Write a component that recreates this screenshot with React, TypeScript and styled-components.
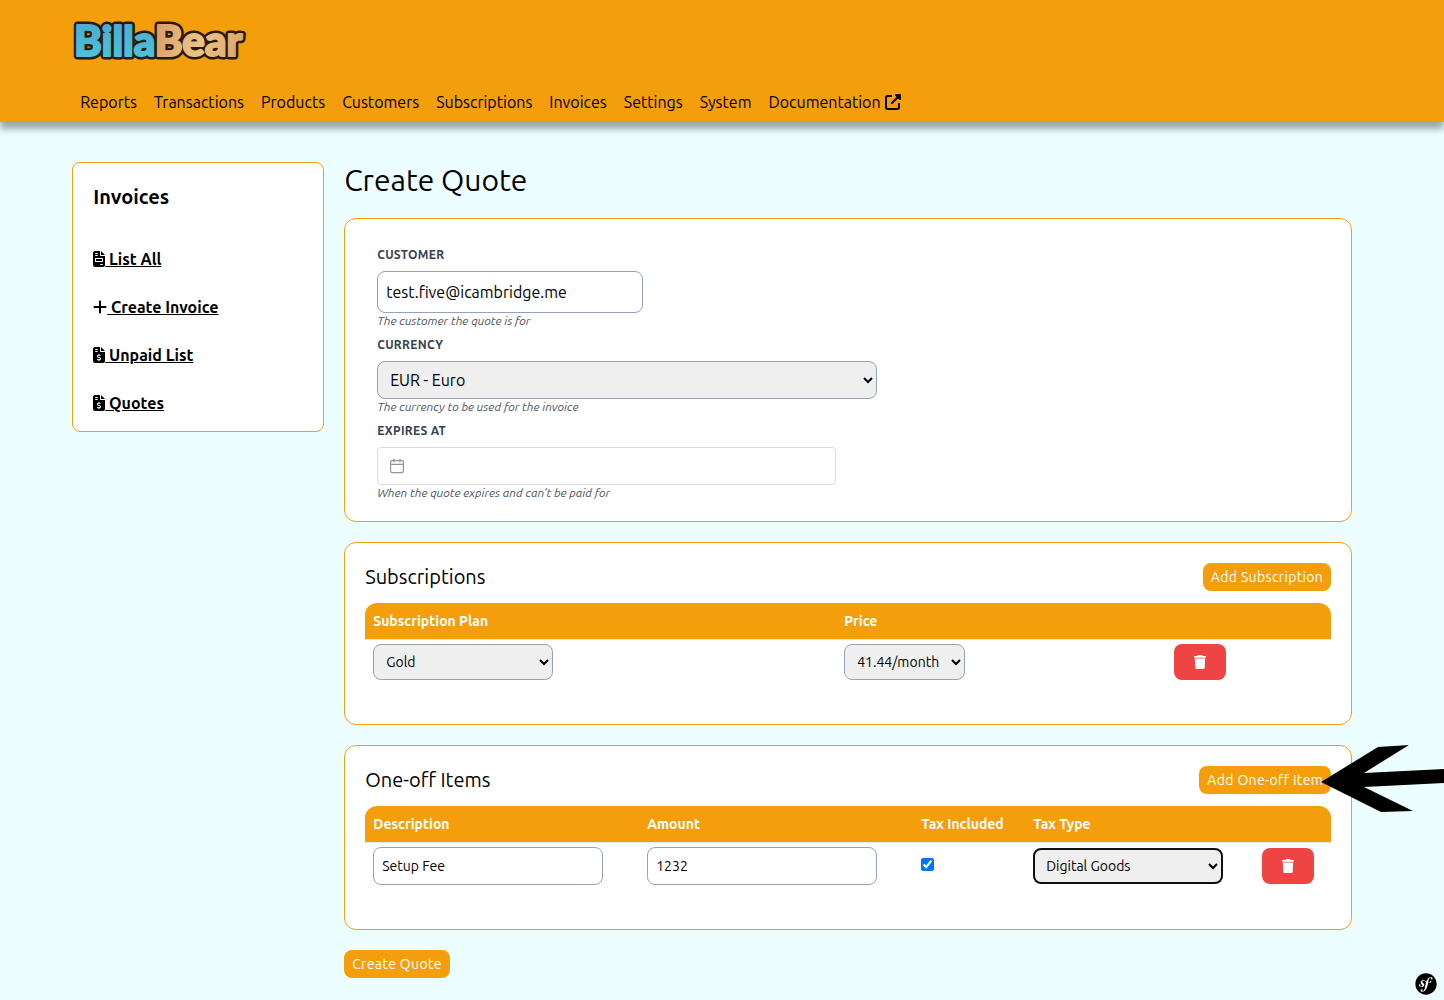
import React, { useState } from 'react';
import styled, { createGlobalStyle, css } from 'styled-components';
import {
  FaFileInvoice,
  FaFileInvoiceDollar,
  FaPlus,
  FaSymfony,
  FaTrash,
  FaUpRightFromSquare,
} from 'react-icons/fa6';

const orange = '#f59e0b';

const GlobalStyle = createGlobalStyle`
  *, *::before, *::after { box-sizing: border-box; }
  body {
    margin: 0;
    background: #ecfeff;
    color: #000;
    font-family: Ubuntu, "Noto Sans", sans-serif;
    font-size: 16px;
    line-height: 24px;
    overflow-x: hidden;
  }
  h1, h2, p, ul { margin: 0; padding: 0; font-weight: 400; }
  button, input, select { font-family: inherit; margin: 0; }
`;

const Header = styled.header`
  background: ${orange};
  padding: 20px 5% 8px;
  box-shadow: 0 7px 7px rgba(0, 0, 0, 0.35);
`;

const LogoLink = styled.a`
  display: block;
  width: 176px;
  height: 42px;
  svg { display: block; overflow: visible; }
`;

const Nav = styled.nav`
  display: flex;
  flex-wrap: wrap;
  gap: 17px;
  padding: 28px 8px 0;
`;

const NavLink = styled.a`
  display: flex;
  align-items: center;
  gap: 4px;
  color: #000;
  text-decoration: none;
`;

const Layout = styled.div`
  display: grid;
  grid-template-columns: 1fr 4fr;
  align-items: start;
  gap: 20px;
  max-width: 1280px;
  margin: 40px 20px 20px 5%;
`;

const Sidebar = styled.aside`
  background: #fff;
  border: 1px solid ${orange};
  border-radius: 8px;
  padding: 20px 20px 16px;
`;

const SidebarTitle = styled.h2`
  font-size: 20px;
  line-height: 28px;
  font-weight: 700;
  margin-bottom: 36px;
`;

const SideLinks = styled.ul`
  display: grid;
  gap: 24px;
  list-style: none;
`;

const SideLink = styled.a`
  color: #000;
  font-weight: 700;
`;

const IconSlot = styled.span<{ $width: number }>`
  svg {
    width: ${(p) => p.$width}px;
    height: 16px;
    vertical-align: -2px;
  }
`;

const PageTitle = styled.h1`
  font-size: 30px;
  line-height: 36px;
  margin-bottom: 20px;
`;

const Card = styled.section<{ $form?: boolean }>`
  background: #fff;
  border: 1px solid ${orange};
  border-radius: 12px;
  padding: ${(p) => (p.$form ? '28px 32px 20px' : '20px')};
  margin-bottom: 20px;
`;

const Fields = styled.div`
  display: grid;
  gap: 8px;
`;

const Field = styled.div`
  display: flex;
  flex-direction: column;
  align-items: flex-start;
`;

const FieldLabel = styled.label`
  color: #374151;
  font-size: 12px;
  line-height: 16px;
  font-weight: 700;
  letter-spacing: 0.025em;
  text-transform: uppercase;
  margin-bottom: 8px;
`;

const Hint = styled.p`
  color: #4b5563;
  font-size: 12px;
  line-height: 16px;
  font-style: italic;
`;

const control = css<{ $small?: boolean; $width: number }>`
  width: ${(p) => p.$width}px;
  max-width: 100%;
  border: 1px solid #94a3b8;
  border-radius: 8px;
  padding: 0 8px;
  color: #000;
  font-size: ${(p) => (p.$small ? 14 : 16)}px;
`;

const TextInput = styled.input<{ $small?: boolean; $width: number }>`
  ${control}
  display: block;
  height: ${(p) => (p.$small ? 38 : 42)}px;
  background: #fff;
`;

const Select = styled.select<{ $small?: boolean; $active?: boolean; $width: number }>`
  ${control}
  display: block;
  height: ${(p) => (p.$small ? 36 : 38)}px;
  background: #efefef;
  ${(p) => p.$active && 'border: 2px solid #101010; padding: 0 7px;'}
`;

const DateBox = styled.div`
  display: flex;
  align-items: center;
  gap: 8px;
  width: 459px;
  max-width: 100%;
  height: 38px;
  padding: 0 12px;
  border: 1px solid #ddd;
  border-radius: 4px;
  input {
    flex: 1;
    min-width: 0;
    border: 0;
    outline: 0;
    background: transparent;
    font-size: 16px;
  }
`;

const CardHead = styled.div`
  display: flex;
  justify-content: space-between;
  align-items: center;
  margin-bottom: 12px;
`;

const CardTitle = styled.h2`
  font-size: 20px;
  line-height: 28px;
`;

const Button = styled.button`
  display: block;
  border: 0;
  border-radius: 8px;
  background: ${orange};
  color: #fff;
  padding: 4px 8px;
  font-size: 14px;
  line-height: 20px;
  letter-spacing: 0.025em;
  cursor: pointer;
`;

const Pointed = styled.div`
  position: relative;
`;

const Arrow = styled.svg`
  position: absolute;
  top: -21px;
  right: -113px;
  pointer-events: none;
`;

const Table = styled.table`
  width: 100%;
  table-layout: fixed;
  border-collapse: separate;
  border-spacing: 0;
  margin-bottom: 20px;
  font-size: 14px;
  line-height: 20px;
  th {
    background: ${orange};
    background-clip: padding-box;
    color: #fff;
    font-weight: 700;
    text-align: left;
    padding: 8px;
    border-bottom: 1px solid #e5e7eb;
  }
  th:first-child { border-top-left-radius: 12px; }
  th:last-child { border-top-right-radius: 12px; }
  td { padding: 4px 8px; vertical-align: middle; }
`;

const Check = styled.input`
  display: block;
  width: 13px;
  height: 13px;
  margin: 0 0 4px;
`;

const DeleteButton = styled.button`
  display: flex;
  align-items: center;
  justify-content: center;
  width: 52px;
  height: 36px;
  border: 0;
  border-radius: 8px;
  background: #ef4444;
  color: #fff;
  cursor: pointer;
`;

const Profiler = styled.button`
  position: fixed;
  right: 7px;
  bottom: 5px;
  width: 22px;
  height: 22px;
  padding: 0;
  border: 0;
  border-radius: 50%;
  background: #fff;
  color: #000;
  cursor: pointer;
  svg { display: block; }
`;

const navItems = ['Reports', 'Transactions', 'Products', 'Customers', 'Subscriptions', 'Invoices', 'Settings', 'System'];

const sideItems = [
  { label: 'List All', Icon: FaFileInvoice, width: 12 },
  { label: 'Create Invoice', Icon: FaPlus, width: 14 },
  { label: 'Unpaid List', Icon: FaFileInvoiceDollar, width: 12 },
  { label: 'Quotes', Icon: FaFileInvoiceDollar, width: 12 },
];

const Wordmark = styled.text`
  font-family: Lato, sans-serif;
  font-weight: 900;
  font-size: 42px;
  stroke-linejoin: round;
`;

const Logo = () => (
  <svg width="176" height="42" viewBox="0 0 176 42" role="img" aria-label="BillaBear">
    <defs>
      <linearGradient id="blue" x1="0" y1="0" x2="0" y2="1">
        <stop offset="0.2" stopColor="#4aaed2" />
        <stop offset="0.8" stopColor="#4cc0d8" />
      </linearGradient>
      <linearGradient id="tan" gradientUnits="userSpaceOnUse" x1="84" y1="8" x2="172" y2="36">
        <stop offset="0" stopColor="#dd9c66" />
        <stop offset="0.5" stopColor="#eac587" />
        <stop offset="1" stopColor="#dfa168" />
      </linearGradient>
    </defs>
    <Wordmark x="2" y="36" strokeWidth="7" paintOrder="stroke">
      <tspan fill="url(#blue)" stroke="#2a1a10">Billa</tspan>
      <tspan fill="url(#tan)" stroke="#2a1a10">Bear</tspan>
    </Wordmark>
    <Wordmark x="2" y="36" strokeWidth="2" aria-hidden="true">
      <tspan fill="url(#blue)" stroke="url(#blue)">Billa</tspan>
      <tspan fill="url(#tan)" stroke="url(#tan)">Bear</tspan>
    </Wordmark>
  </svg>
);

const CalendarIcon = () => (
  <svg width="16" height="16" viewBox="0 0 16 16" fill="none" stroke="#959595" strokeLinecap="round" aria-hidden="true">
    <rect x="0.6" y="2.6" width="12.8" height="12" rx="1.5" strokeWidth="1.2" />
    <path d="M0.6 6.4h12.8M4 1v3M10 1v3" strokeWidth="1.2" />
  </svg>
);

export default function App() {
  const [email, setEmail] = useState('test.five@icambridge.me');
  const [expires, setExpires] = useState('');
  const [description, setDescription] = useState('Setup Fee');
  const [amount, setAmount] = useState('1232');
  const [taxIncluded, setTaxIncluded] = useState(true);

  return (
    <>
      <GlobalStyle />
      <Header>
        <LogoLink href="#home"><Logo /></LogoLink>
        <Nav>
          {navItems.map((item) => (
            <NavLink key={item} href={`#${item.toLowerCase()}`}>{item}</NavLink>
          ))}
          <NavLink href="#documentation">
            Documentation <FaUpRightFromSquare size={16} />
          </NavLink>
        </Nav>
      </Header>

      <Layout>
        <Sidebar>
          <SidebarTitle>Invoices</SidebarTitle>
          <SideLinks>
            {sideItems.map(({ label, Icon, width }) => (
              <li key={label}>
                <SideLink href="#invoices">
                  <IconSlot $width={width}><Icon /></IconSlot> {label}
                </SideLink>
              </li>
            ))}
          </SideLinks>
        </Sidebar>

        <main>
          <PageTitle>Create Quote</PageTitle>

          <Card $form>
            <Fields>
              <Field>
                <FieldLabel htmlFor="customer">Customer</FieldLabel>
                <TextInput id="customer" $width={266} value={email} onChange={(e) => setEmail(e.target.value)} />
                <Hint>The customer the quote is for</Hint>
              </Field>
              <Field>
                <FieldLabel htmlFor="currency">Currency</FieldLabel>
                <Select id="currency" $width={500}>
                  <option>EUR - Euro</option>
                </Select>
                <Hint>The currency to be used for the invoice</Hint>
              </Field>
              <Field>
                <FieldLabel htmlFor="expires">Expires At</FieldLabel>
                <DateBox>
                  <CalendarIcon />
                  <input id="expires" value={expires} onChange={(e) => setExpires(e.target.value)} />
                </DateBox>
                <Hint>When the quote expires and can't be paid for</Hint>
              </Field>
            </Fields>
          </Card>

          <Card>
            <CardHead>
              <CardTitle>Subscriptions</CardTitle>
              <Button type="button">Add Subscription</Button>
            </CardHead>
            <Table>
              <colgroup>
                <col width="471" />
                <col width="330" />
                <col width="165" />
              </colgroup>
              <thead>
                <tr>
                  <th>Subscription Plan</th>
                  <th>Price</th>
                  <th aria-label="Actions" />
                </tr>
              </thead>
              <tbody>
                <tr>
                  <td>
                    <Select $small $width={180} aria-label="Subscription Plan">
                      <option>Gold</option>
                    </Select>
                  </td>
                  <td>
                    <Select $small $width={121} aria-label="Price">
                      <option>41.44/month</option>
                    </Select>
                  </td>
                  <td>
                    <DeleteButton type="button" aria-label="Delete subscription"><FaTrash size={14} /></DeleteButton>
                  </td>
                </tr>
              </tbody>
            </Table>
          </Card>

          <Card>
            <CardHead>
              <CardTitle>One-off Items</CardTitle>
              <Pointed>
                <Button type="button">Add One-off Item</Button>
                <Arrow width="123" height="68" viewBox="0 0 123 68" aria-hidden="true">
                  <path d="M0 37 57 2 88 0 43 28 123 24V38L43 42 92 66 60 67Z" />
                </Arrow>
              </Pointed>
            </CardHead>
            <Table>
              <colgroup>
                <col width="274" />
                <col width="274" />
                <col width="112" />
                <col width="229" />
                <col width="77" />
              </colgroup>
              <thead>
                <tr>
                  <th>Description</th>
                  <th>Amount</th>
                  <th>Tax Included</th>
                  <th>Tax Type</th>
                  <th aria-label="Actions" />
                </tr>
              </thead>
              <tbody>
                <tr>
                  <td>
                    <TextInput $small $width={230} aria-label="Description" value={description} onChange={(e) => setDescription(e.target.value)} />
                  </td>
                  <td>
                    <TextInput $small $width={230} aria-label="Amount" value={amount} onChange={(e) => setAmount(e.target.value)} />
                  </td>
                  <td>
                    <Check type="checkbox" aria-label="Tax Included" checked={taxIncluded} onChange={(e) => setTaxIncluded(e.target.checked)} />
                  </td>
                  <td>
                    <Select $small $active $width={190} aria-label="Tax Type">
                      <option>Digital Goods</option>
                    </Select>
                  </td>
                  <td>
                    <DeleteButton type="button" aria-label="Delete item"><FaTrash size={14} /></DeleteButton>
                  </td>
                </tr>
              </tbody>
            </Table>
          </Card>

          <Button type="submit">Create Quote</Button>
        </main>
      </Layout>

      <Profiler type="button" aria-label="Symfony toolbar">
        <FaSymfony size={22} />
      </Profiler>
    </>
  );
}
